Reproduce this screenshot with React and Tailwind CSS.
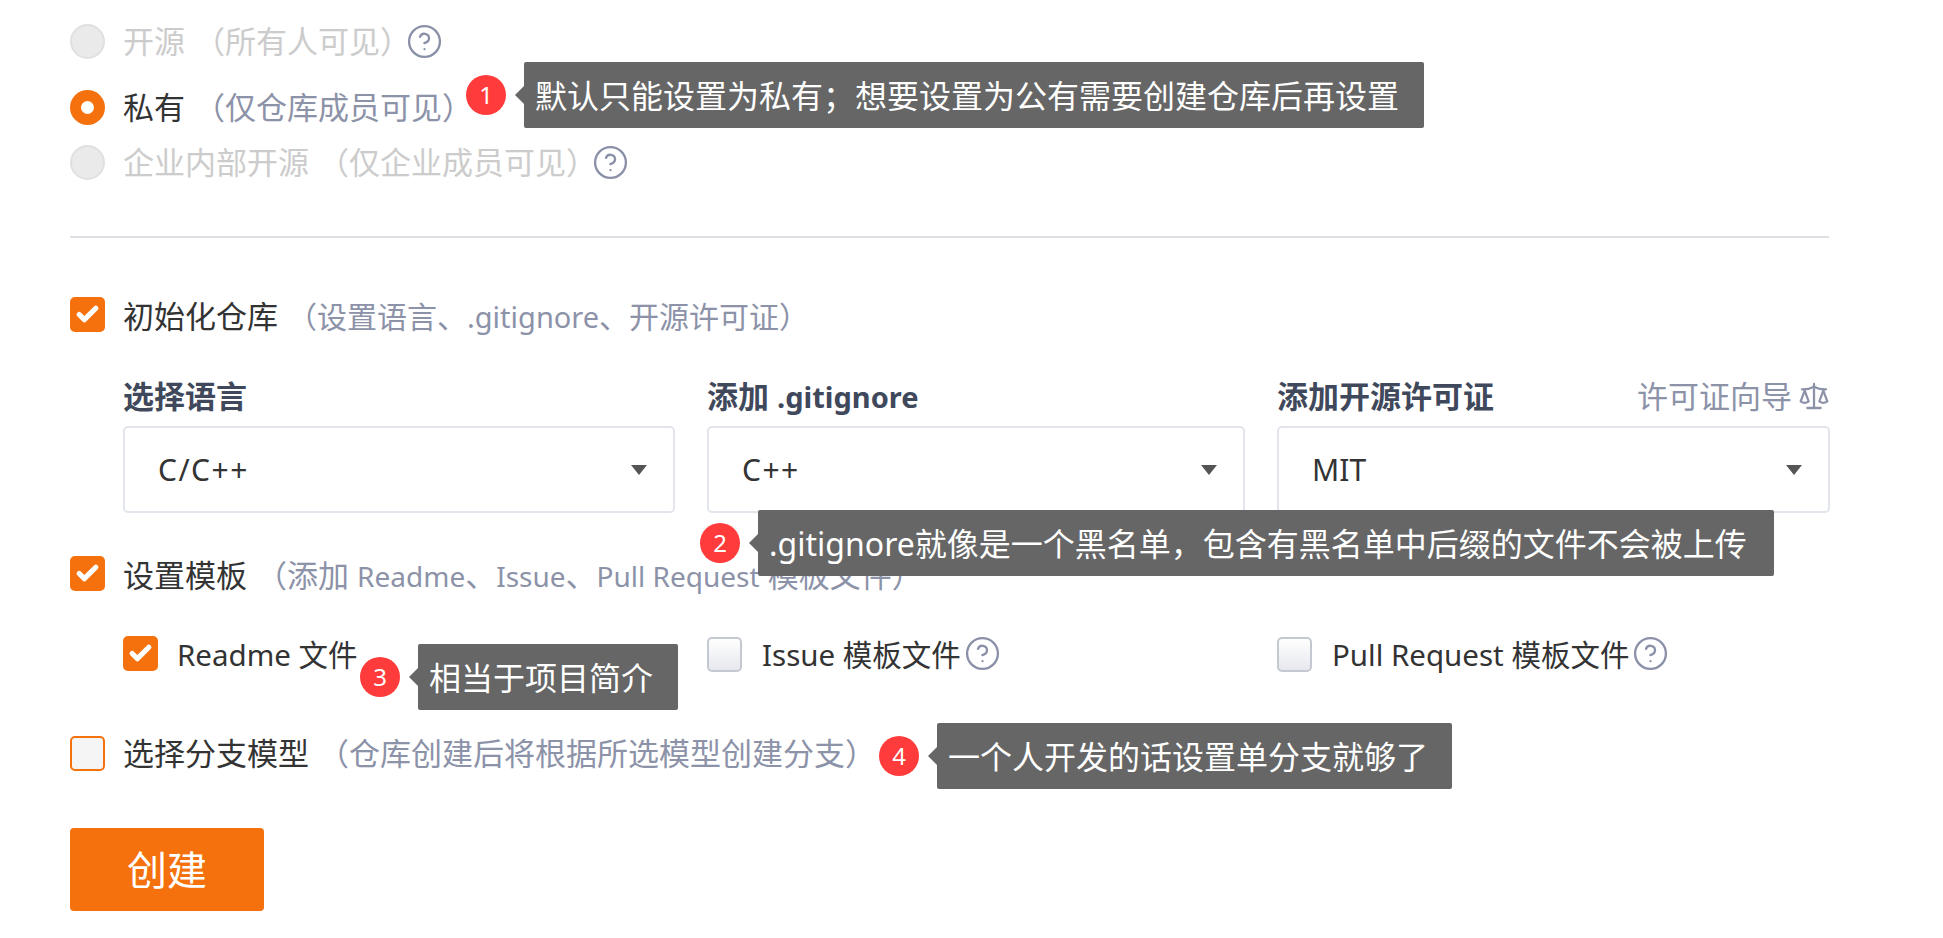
import React from "react";
import { Check, CircleHelp, Scale } from "lucide-react";

const FONT = "font-['Noto_Sans','Noto_Sans_CJK_SC',sans-serif]";

const Help = ({ className = "-ml-[5px]" }) => <CircleHelp className={`w-[37px] h-[37px] shrink-0 text-[#8a90a8] ${className}`} strokeWidth={1.5} />;

const Radio = ({ checked, label, hint, help }) => (
    <div className="flex items-center h-[50px]">
        {checked ? (
            <span className="w-[35px] h-[35px] rounded-full bg-[#f5710d] flex items-center justify-center shrink-0">
                <span className="w-[13px] h-[13px] rounded-full bg-white" />
            </span>
        ) : (
            <span className="w-[35px] h-[35px] rounded-full bg-[#eaeaea] border-2 border-[#e0e0e0] shrink-0" />
        )}
        <span className={`ml-[18px] ${checked ? "text-[#333]" : "text-[#ccc]"}`}>{label}</span>
        <span className={`ml-[9px] ${checked ? "text-[#8c92a8]" : "text-[#ccc]"}`}>{hint}</span>
        {help && <Help />}
    </div>
);

const Box = ({ state }) => {
    if (state === "on") {
        return (
            <span className="w-[35px] h-[35px] -mt-[3px] rounded-[5px] bg-[#f5710d] flex items-center justify-center shrink-0">
                <Check className="w-[25px] h-[25px] text-white" strokeWidth={5} />
            </span>
        );
    }
    if (state === "focus") {
        return <span className="w-[35px] h-[35px] rounded-[5px] bg-[#f5f5f5] border-2 border-[#f5710d] shrink-0" />;
    }
    return <span className="w-[35px] h-[35px] -mt-[2px] rounded-[5px] bg-gradient-to-b from-white to-[#e6e8ee] border-2 border-[#c4c8d0] shrink-0" />;
};

const Select = ({ value, className }) => (
    <div className={`h-[87px] flex items-center justify-between pl-[33px] pr-[26px] bg-white border-2 border-[#e2e5ec] rounded-[5px] text-[#333] text-[30px] ${className}`}>
        <span>{value}</span>
        <span className="w-0 h-0 border-x-[8px] border-x-transparent border-t-[10px] border-t-[#555]" />
    </div>
);

const Note = ({ n, text, x, y, w }) => (
    <div className="absolute flex items-center h-[66px]" style={{ left: x, top: y }}>
        <span className="w-[40px] h-[40px] rounded-full bg-[#ff3b3b] text-white text-[24px] flex items-center justify-center shrink-0">{n}</span>
        <span className="ml-[9px] w-0 h-0 border-y-[9px] border-y-transparent border-r-[9px] border-r-[#666]" />
        <div className="h-[66px] flex items-center pl-[11px] pt-[2px] bg-[#666] text-white text-[32px] rounded-[2px] whitespace-nowrap" style={{ width: w }}>
            {text}
        </div>
    </div>
);

export default function App() {
    return (
        <div className={`relative w-[1943px] h-[938px] overflow-hidden bg-white pl-[70px] pt-[16px] text-[31px] ${FONT}`}>
            <Radio label="开源" hint="（所有人可见）" help />
            <div className="mt-[16px]">
                <Radio checked label="私有" hint="（仅仓库成员可见）" />
            </div>
            <div className="mt-[5px]">
                <Radio label="企业内部开源" hint="（仅企业成员可见）" help />
            </div>

            <div className="mt-[49px] w-[1759px] h-[2px] bg-[#dcdfe4]" />

            <div className="mt-[53px] flex items-center h-[50px]">
                <Box state="on" />
                <span className="ml-[18px] text-[#333]">初始化仓库</span>
                <span className="ml-[9px] text-[#8c92a8] text-[30px]">（设置语言、<span className="text-[29px]">.gitignore</span>、开源许可证）</span>
            </div>

            <div className="mt-[35px] ml-[53px] w-[1706px] grid grid-cols-[552px_538px_553px] gap-x-[32px] gap-y-[10px] text-[#40485b] font-bold text-[31px]">
                <div className="h-[40px] flex items-center">选择语言</div>
                <div className="h-[40px] flex items-center"><span>添加 <span className="text-[29px]">.gitignore</span></span></div>
                <div className="h-[40px] flex items-center justify-between">
                    <span>添加开源许可证</span>
                    <span className="flex items-center font-normal text-[#8c92a8]">
                        许可证向导
                        <Scale className="ml-[6px] w-[32px] h-[32px]" strokeWidth={1.7} />
                    </span>
                </div>
                <Select value={<span className="tracking-[1.5px]">C/C++</span>} className="font-normal" />
                <Select value={<span className="tracking-[1.5px]">C++</span>} className="font-normal" />
                <Select value="MIT" className="font-normal" />
            </div>

            <div className="mt-[37px] flex items-center h-[50px]">
                <Box state="on" />
                <span className="ml-[18px] text-[#333]">设置模板</span>
                <span className="ml-[9px] text-[#8c92a8] text-[31px]">
                    （添加 <span className="text-[28px]">Readme</span>、<span className="text-[28px]">Issue</span>、<span className="text-[28px]">Pull Request</span> 模板文件）
                </span>
            </div>

            <div className="mt-[30px] ml-[53px] w-[1706px] grid grid-cols-[552px_538px_553px] gap-x-[32px] h-[50px] text-[#333] text-[29.5px]">
                <div className="flex items-center">
                    <Box state="on" />
                    <span className="ml-[19px]">Readme 文件</span>
                </div>
                <div className="flex items-center">
                    <Box />
                    <span className="ml-[20px]">Issue 模板文件</span>
                    <Help className="ml-[3px] -mt-[3px]" />
                </div>
                <div className="flex items-center">
                    <Box />
                    <span className="ml-[20px]">Pull Request 模板文件</span>
                    <Help className="ml-[3px] -mt-[3px]" />
                </div>
            </div>

            <div className="mt-[48px] flex items-center h-[50px]">
                <Box state="focus" />
                <span className="ml-[18px] text-[#333]">选择分支模型</span>
                <span className="ml-[9px] text-[#8c92a8]">（仓库创建后将根据所选模型创建分支）</span>
            </div>

            <button className="mt-[50px] block w-[194px] h-[83px] bg-[#f5710d] rounded-[4px] text-white text-[40px]">创建</button>

            <Note n="1" text="默认只能设置为私有；想要设置为公有需要创建仓库后再设置" x={466} y={62} w={900} />
            <Note n="2" text=".gitignore就像是一个黑名单，包含有黑名单中后缀的文件不会被上传" x={700} y={510} w={1016} />
            <Note n="3" text="相当于项目简介" x={360} y={644} w={260} />
            <Note n="4" text="一个人开发的话设置单分支就够了" x={879} y={723} w={515} />
        </div>
    );
}
